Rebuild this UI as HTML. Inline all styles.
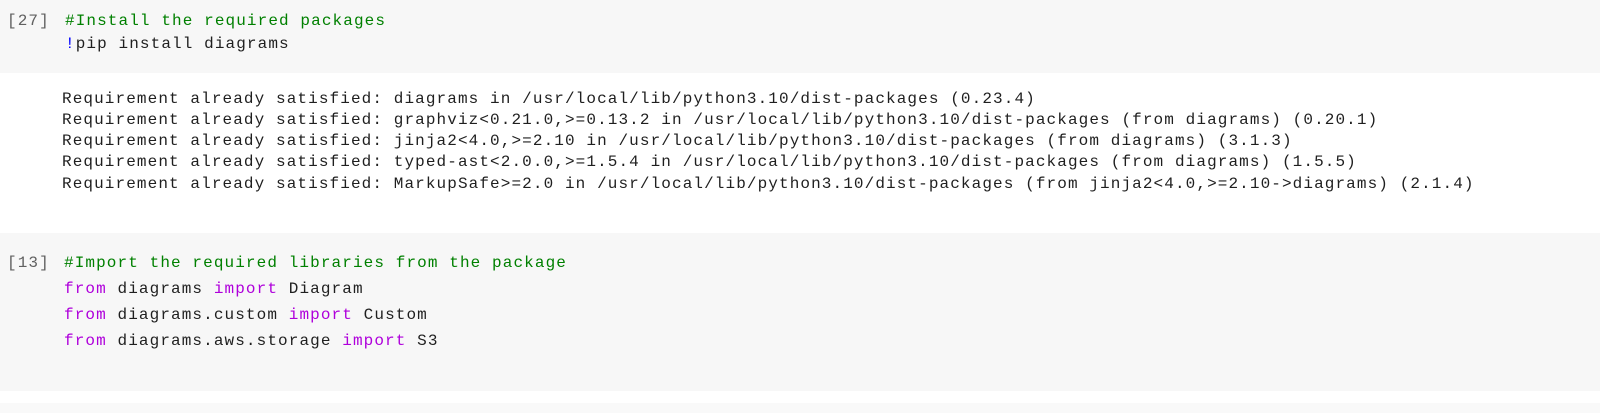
<!DOCTYPE html>
<html><head><style>
body{margin:0;width:1600px;height:413px;background:#fff;overflow:hidden;position:relative;font-family:"Liberation Mono",monospace;font-size:16px;letter-spacing:1.1px;color:#1f1f1f}
.bg{position:absolute;left:0;width:1600px;background:#f7f7f7}
.l{position:absolute;white-space:pre;line-height:20px}
.n{color:#616161;left:7px}
.c{color:#008000}
.k{color:#af00db}
</style></head><body>
<div class="bg" style="top:0;height:73px"></div>
<div class="bg" style="top:233px;height:158px"></div>
<div class="bg" style="top:403px;height:10px;background:#f9f9f9"></div>
<div class="l n" style="top:11px">[27]</div>
<div class="l c" style="left:65px;top:11px">#Install the required packages</div>
<div class="l" style="left:65px;top:34px"><span style="color:#0000ff">!</span>pip install diagrams</div>
<div class="l" style="left:62px;top:89px">Requirement already satisfied: diagrams in /usr/local/lib/python3.10/dist-packages (0.23.4)</div>
<div class="l" style="left:62px;top:110px">Requirement already satisfied: graphviz&lt;0.21.0,&gt;=0.13.2 in /usr/local/lib/python3.10/dist-packages (from diagrams) (0.20.1)</div>
<div class="l" style="left:62px;top:131px">Requirement already satisfied: jinja2&lt;4.0,&gt;=2.10 in /usr/local/lib/python3.10/dist-packages (from diagrams) (3.1.3)</div>
<div class="l" style="left:62px;top:152px">Requirement already satisfied: typed-ast&lt;2.0.0,&gt;=1.5.4 in /usr/local/lib/python3.10/dist-packages (from diagrams) (1.5.5)</div>
<div class="l" style="left:62px;top:174px">Requirement already satisfied: MarkupSafe&gt;=2.0 in /usr/local/lib/python3.10/dist-packages (from jinja2&lt;4.0,&gt;=2.10-&gt;diagrams) (2.1.4)</div>
<div class="l n" style="top:253px">[13]</div>
<div class="l c" style="left:64px;top:253px">#Import the required libraries from the package</div>
<div class="l" style="left:64px;top:279px"><span class="k">from</span> diagrams <span class="k">import</span> Diagram</div>
<div class="l" style="left:64px;top:305px"><span class="k">from</span> diagrams.custom <span class="k">import</span> Custom</div>
<div class="l" style="left:64px;top:331px"><span class="k">from</span> diagrams.aws.storage <span class="k">import</span> S3</div>
</body></html>
